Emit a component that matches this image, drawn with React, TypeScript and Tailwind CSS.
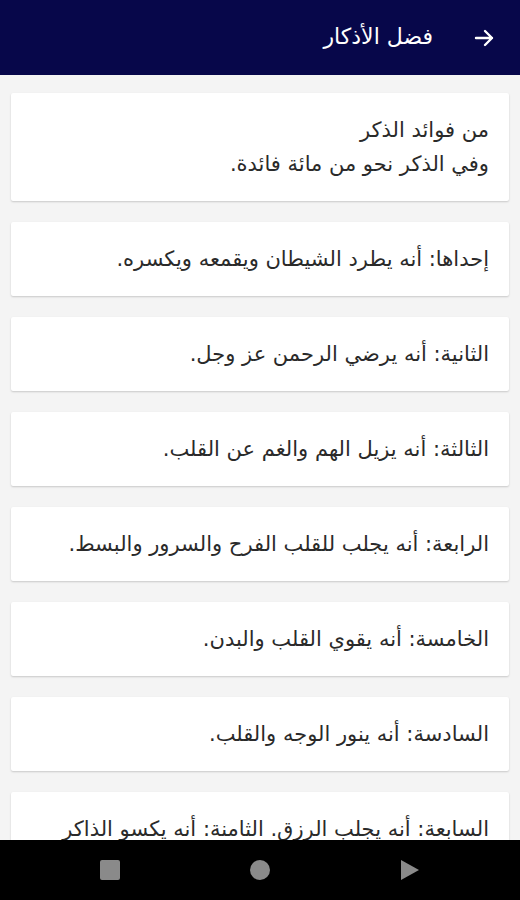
import React from "react";

const items = [
  ["من فوائد الذكر", "وفي الذكر نحو من مائة فائدة."],
  ["إحداها: أنه يطرد الشيطان ويقمعه ويكسره."],
  ["الثانية: أنه يرضي الرحمن عز وجل."],
  ["الثالثة: أنه يزيل الهم والغم عن القلب."],
  ["الرابعة: أنه يجلب للقلب الفرح والسرور والبسط."],
  ["الخامسة: أنه يقوي القلب والبدن."],
  ["السادسة: أنه ينور الوجه والقلب."],
  ["السابعة: أنه يجلب الرزق. الثامنة: أنه يكسو الذاكر المهابة والحلاوة والنضرة."],
];

function App() {
  return (
    <div
      dir="rtl"
      className="h-[900px] w-[520px] flex flex-col bg-[#f4f4f4] overflow-hidden"
      style={{ fontFamily: '"DejaVu Sans", "Noto Sans", sans-serif' }}
    >
      <div className="h-[75px] shrink-0 bg-[#07074a] flex items-center text-white">
        <svg className="mr-[24px] ml-[39px]" width="24" height="24" viewBox="0 0 24 24" fill="none" stroke="white" strokeWidth="2.4" strokeLinecap="round" strokeLinejoin="round">
          <path d="M4 12h16M13 5l7 7-7 7" />
        </svg>
        <div className="text-[22px] pb-[2px]">فضل الأذكار</div>
      </div>
      <div className="flex-1 overflow-hidden flex flex-col gap-[21px] px-[11px] pt-[18px]">
        {items.map((lines, i) => (
          <div key={i} className="shrink-0 bg-white shadow-[0_1px_2px_rgba(0,0,0,0.18)] rounded-[2px] px-[20px] py-[20px] text-[21px] leading-[34px] text-[#2a2a2a]">
            {lines.map((l, j) => (
              <div key={j}>{l}</div>
            ))}
          </div>
        ))}
      </div>
      <div className="h-[60px] shrink-0 bg-black flex items-center justify-between px-[100px]" dir="ltr">
        <div className="w-[20px] h-[20px] bg-[#8a8a8a] rounded-[2px]" />
        <div className="w-[20px] h-[20px] bg-[#8a8a8a] rounded-full" />
        <svg width="20" height="22" viewBox="0 0 20 22">
          <path d="M1 1l18 10L1 21z" fill="#8a8a8a" />
        </svg>
      </div>
    </div>
  );
}

export default App;
